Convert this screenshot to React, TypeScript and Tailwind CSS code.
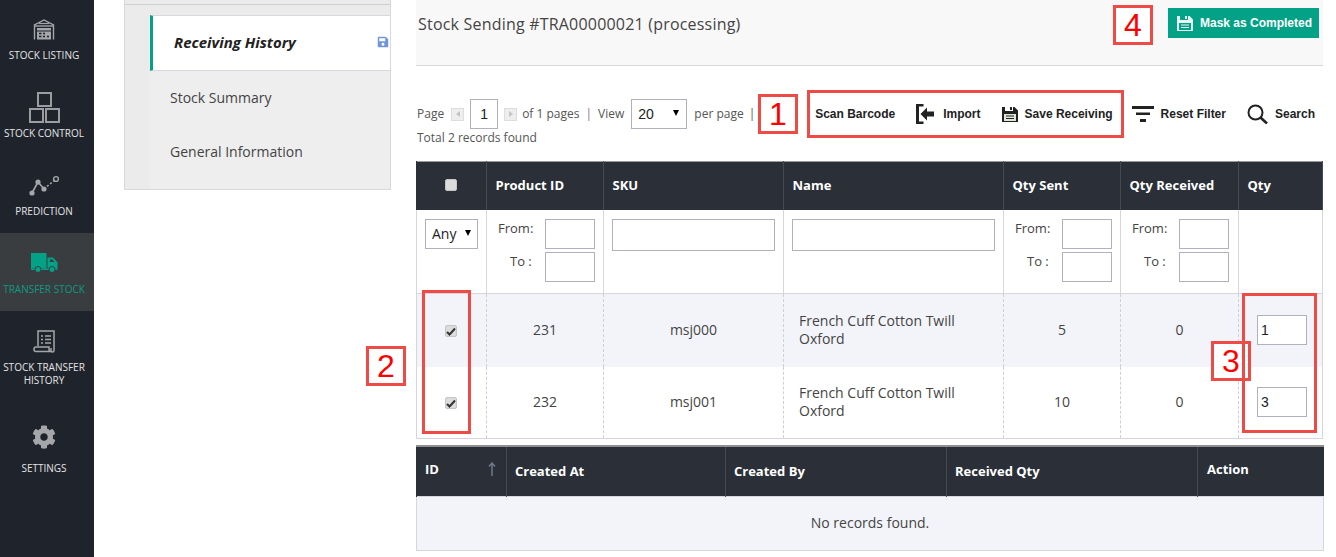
import { FaCog, FaSave } from 'react-icons/fa';

const green = '#03a287';

function WarehouseIcon() {
  return (
    <svg width="22" height="21" viewBox="0 0 22 21" fill="none" stroke="#a5a6a9" strokeWidth="1.4">
      <path d="M1.5 20.5V6L11 1l9.5 5v14.5" />
      <path d="M1.5 7h19" />
      <path d="M6 4.5h10" strokeWidth="1.2" />
      <rect x="4" y="9" width="14" height="11.5" fill="#a5a6a9" stroke="none" />
      <path d="M4 12h14" stroke="#1f232c" strokeWidth="1" />
      <path d="M6 14.5h2.5M10 14.5h2M6 17.5h2.5M10 17.5h2M14 17.5h2" stroke="#1f232c" strokeWidth="1.4" />
    </svg>
  );
}

function BoxesIcon() {
  return (
    <svg width="31" height="31" viewBox="0 0 31 31" fill="none" stroke="#9c9da0" strokeWidth="2">
      <rect x="9" y="1" width="13" height="13" />
      <rect x="1" y="17" width="13" height="13" />
      <rect x="17" y="17" width="13" height="13" />
    </svg>
  );
}

function PredictionIcon() {
  return (
    <svg width="31" height="21" viewBox="0 0 31 21">
      <path d="M3 18L9 7l6 7" fill="none" stroke="#a5a6a9" strokeWidth="1.6" />
      <path d="M15 14l12-10" fill="none" stroke="#a5a6a9" strokeWidth="1.6" strokeDasharray="2 2" />
      <circle cx="3" cy="18" r="2.6" fill="#a5a6a9" />
      <circle cx="9" cy="7" r="2.6" fill="#a5a6a9" />
      <circle cx="15" cy="14" r="2.6" fill="#a5a6a9" />
      <circle cx="27" cy="4" r="2.4" fill="none" stroke="#a5a6a9" strokeWidth="1.4" />
    </svg>
  );
}

function TruckIcon() {
  return (
    <svg width="27" height="20" viewBox="0 0 27 20" fill={green}>
      <path d="M0 0h15.5v15.5H0z" />
      <path d="M16.5 4.5h5.5l4.5 5v6h-10z" />
      <path d="M19 6.5h2.4l2 2.6H19z" fill="#3a3d40" />
      <path d="M0 15.5h26.5v1.5H0z" />
      <circle cx="7" cy="16.5" r="3" stroke="#3a3d40" />
      <circle cx="21" cy="16.5" r="3" stroke="#3a3d40" />
    </svg>
  );
}

function ReceiptIcon() {
  return (
    <svg width="22" height="23" viewBox="0 0 22 23" fill="none" stroke="#a5a6a9" strokeWidth="1.5">
      <path d="M5 16V1h16v19.5a1.5 1.5 0 0 1-3 0V18" />
      <path d="M1 19a2 2 0 0 1 2-2h13v2.5a2 2 0 0 0 2 2H3a2 2 0 0 1-2-2z" />
      <path d="M8 6h2M12 6h6M8 9.5h2M12 9.5h6M8 13h2M12 13h6" />
    </svg>
  );
}

function SaveIcon({ color, inner }: { color: string; inner: string }) {
  return (
    <svg width="16" height="16" viewBox="0 0 16 16">
      <path d="M0 1h3v4h8V1h1.5L16 4.5V16H0z" fill={color} />
      <path d="M8 1h2v3H8z" fill={color} />
      <path d="M2 8h12v7H2z" fill={inner} />
      <path d="M4 10h8M4 12.5h8" stroke={color} strokeWidth="1" />
    </svg>
  );
}

function ImportIcon() {
  return (
    <svg width="18" height="20" viewBox="0 0 18 20" fill="#222">
      <path d="M0 0h7.5v2.5H3v15h4.5V20H0z" />
      <path d="M4.5 10L11 3.5v4h7v5h-7v4z" />
    </svg>
  );
}

function FilterIcon() {
  return (
    <svg width="22" height="16" viewBox="0 0 22 16" fill="#222">
      <path d="M0 0h22v3H0zM4 6.5h14v2.5H4zM8 13h6v3H8z" />
    </svg>
  );
}

function SearchIcon() {
  return (
    <svg width="21" height="20" viewBox="0 0 21 20" fill="none" stroke="#222" strokeWidth="2">
      <circle cx="8.5" cy="8.5" r="7" />
      <path d="M13.5 13.5L20 19.5" strokeWidth="2.6" />
    </svg>
  );
}

function NavItem({
  icon,
  label,
  active,
  settings,
}: {
  icon: React.ReactNode;
  label: React.ReactNode;
  active?: boolean;
  settings?: boolean;
}) {
  return (
    <div
      className={`flex flex-col items-center pr-[6px] pt-[15px] ${active ? 'bg-[#3a3d40] text-[#0c9a80]' : 'text-[#e4e4e4]'} ${settings ? 'h-[120px]' : 'min-h-[78px]'}`}
    >
      <div className="flex h-[30px] items-center justify-center">{icon}</div>
      <div className={`text-center text-[10px] leading-[13px] ${settings ? 'mt-[10px]' : 'mt-[5px]'}`}>{label}</div>
    </div>
  );
}

function Sidebar() {
  return (
    <nav className="-mt-px w-[94px] shrink-0 bg-[#1f232c]">
      <NavItem icon={<WarehouseIcon />} label="STOCK LISTING" />
      <NavItem icon={<BoxesIcon />} label="STOCK CONTROL" />
      <NavItem icon={<PredictionIcon />} label="PREDICTION" />
      <NavItem icon={<TruckIcon />} label="TRANSFER STOCK" active />
      <div className="h-[96px]">
        <NavItem
          icon={<ReceiptIcon />}
          label={
            <>
              STOCK TRANSFER
              <br />
              HISTORY
            </>
          }
        />
      </div>
      <NavItem icon={<FaCog className="text-[24px] text-[#a5a6a9]" />} label="SETTINGS" settings />
    </nav>
  );
}

function SidePanel() {
  return (
    <aside className="ml-[30px] h-[190px] w-[267px] shrink-0 border-x border-b border-[#d8d8de] bg-[#ebebeb] text-[14px] text-[#444]">
      <div className="h-[5px] border-b border-[#cfcfcf]" />
      <div className="ml-[25px] mt-[10px] bg-[#eeeeee] pb-[10px]">
        <div className="flex h-[56px] items-center justify-between border-y border-l-[3px] border-[#d8d8de] border-l-[#03a287] bg-white pb-[2px] pl-[21px]">
          <span className="text-[15px] font-bold italic text-[#222]">Receiving History</span>
          <FaSave className="mr-[1px] text-[12px] text-[#6f96d8]" />
        </div>
        <div className="flex h-[54px] items-center pb-[2px] pl-[20px]">Stock Summary</div>
        <div className="flex h-[54px] items-center pb-[2px] pl-[20px]">General Information</div>
      </div>
    </aside>
  );
}

function PagerButton({ dir }: { dir: 'prev' | 'next' }) {
  return (
    <span className="flex h-[13px] w-[13px] items-center justify-center border border-[#dddddd] bg-[#eeeeee]">
      <span
        className={`h-0 w-0 border-y-[3px] border-y-transparent ${dir === 'prev' ? 'border-r-[4px] border-r-[#c4c4c4]' : 'border-l-[4px] border-l-[#c4c4c4]'}`}
      />
    </span>
  );
}

function Toolbar() {
  return (
    <div className="flex h-[95px] justify-between text-[12px] text-[#555]">
      <div className="pt-[33px]">
        <div className="flex h-[30px] items-center pl-px">
          <span>Page</span>
          <span className="ml-[7px]">
            <PagerButton dir="prev" />
          </span>
          <span className="ml-[6px] flex h-[30px] w-[28px] items-center justify-center border border-[#b1b1bd] font-['Liberation_Sans'] text-[14px] text-[#222]">
            1
          </span>
          <span className="ml-[6px]">
            <PagerButton dir="next" />
          </span>
          <span className="ml-[5px]">of 1 pages</span>
          <span className="ml-[6px] text-[#88708f]">|</span>
          <span className="ml-[6px]">View</span>
          <span className="relative ml-[7px] flex h-[30px] w-[56px] items-center border border-[#b1b1bd] pl-[6px] font-['Liberation_Sans'] text-[14px] text-[#222]">
            20
            <span className="absolute right-[7px] top-[10px] h-0 w-0 border-x-[3.5px] border-t-[6px] border-x-transparent border-t-black" />
          </span>
          <span className="ml-[7px]">per page</span>
          <span className="ml-[5px]">|</span>
        </div>
        <div className="mt-[1px] pl-px leading-[16px]">Total 2 records found</div>
      </div>
      <div className="mr-[8px] box-content flex h-[48px] items-center pt-[24px] font-['Liberation_Sans'] text-[12px] font-bold text-[#222]">
        <span>Scan Barcode</span>
        <span className="ml-[21px] flex items-center gap-[9px]">
          <ImportIcon />
          Import
        </span>
        <span className="ml-[21px] flex items-center gap-[7px]">
          <SaveIcon color="#222" inner="#dfe6d8" />
          Save Receiving
        </span>
        <span className="ml-[19px] flex items-center gap-[7px]">
          <FilterIcon />
          Reset Filter
        </span>
        <span className="ml-[21px] flex items-center gap-[7px]">
          <SearchIcon />
          Search
        </span>
      </div>
    </div>
  );
}

function Checkbox({ checked }: { checked?: boolean }) {
  return (
    <span className="inline-flex h-[12px] w-[12px] items-center justify-center rounded-[2px] border border-[#c4c4c4] bg-[#dcdcdc] align-middle">
      {checked && (
        <svg width="10" height="9" viewBox="0 0 10 9" fill="none" stroke="#333" strokeWidth="2">
          <path d="M1 5l2.5 2.5L9 1.5" />
        </svg>
      )}
    </span>
  );
}

function RangeFilter({ className }: { className: string }) {
  return (
    <div className={`flex flex-col gap-[3px] pl-[11px] ${className}`}>
      <div className="flex items-start justify-between">
        <span className="text-[13px] leading-[18px]">From:</span>
        <span className="h-[30px] w-[50px] border border-[#b1b1bd] bg-white" />
      </div>
      <div className="flex items-start justify-between">
        <span className="pl-[12px] text-[13px] leading-[18px]">To :</span>
        <span className="h-[30px] w-[50px] border border-[#b1b1bd] bg-white" />
      </div>
    </div>
  );
}

function SendingTable() {
  const headers = ['Product ID', 'SKU', 'Name', 'Qty Sent', 'Qty Received', 'Qty'];
  const rows = [
    { id: '231', sku: 'msj000', sent: '5', qty: '1' },
    { id: '232', sku: 'msj001', sent: '10', qty: '3' },
  ];
  return (
    <table className="w-[906px] table-fixed border-collapse text-[14px] text-[#444]">
      <colgroup>
        <col className="w-[70px]" />
        <col className="w-[117px]" />
        <col className="w-[180px]" />
        <col className="w-[220px]" />
        <col className="w-[117px]" />
        <col className="w-[118px]" />
        <col className="w-[84px]" />
      </colgroup>
      <thead>
        <tr className="h-[48px] border-t border-[#9a9a9a] bg-[#2b2f38] text-left text-[13px] font-bold text-white">
          <th className="border-x border-l-[#2b2f38] border-r-[#454952] pb-[4px] pr-[2px] text-center">
            <Checkbox />
          </th>
          {headers.map((h) => (
            <th key={h} className="border-r border-[#454952] pl-[8.5px]">
              {h}
            </th>
          ))}
        </tr>
      </thead>
      <tbody>
        <tr className="h-[84px] border-x border-[#d6d6dc] align-top">
          <td className="border-r border-[#d6d6dc] pl-[8px] pt-[9px]">
            <span className="relative flex h-[30px] w-[53px] items-center border border-[#b1b1bd] pl-[6px] text-[14px] text-[#222]">
              Any
              <span className="absolute right-[6px] top-[10px] h-0 w-0 border-x-[3.5px] border-t-[6px] border-x-transparent border-t-black" />
            </span>
          </td>
          <td className="border-r border-[#d6d6dc] pt-[9px]">
            <RangeFilter className="pr-[8px]" />
          </td>
          <td className="border-r border-[#d6d6dc] pl-[8px] pt-[9px]">
            <span className="block h-[32px] w-[163px] border border-[#b1b1bd]" />
          </td>
          <td className="border-r border-[#d6d6dc] pl-[8px] pt-[9px]">
            <span className="block h-[32px] w-[203px] border border-[#b1b1bd]" />
          </td>
          <td className="border-r border-[#d6d6dc] pt-[9px]">
            <RangeFilter className="pr-[8px]" />
          </td>
          <td className="border-r border-[#d6d6dc] pt-[9px]">
            <RangeFilter className="pr-[9px]" />
          </td>
          <td />
        </tr>
        {rows.map((row, i) => (
          <tr
            key={row.id}
            className={`border-x border-[#d6d6dc] text-center ${i === 0 ? 'h-[73px] border-t bg-[#f3f4fa]' : 'h-[72px] border-b bg-white'}`}
          >
            <td className="border-r border-dashed border-r-[#cfcfd6] pb-[2px] pr-[2px]">
              <Checkbox checked />
            </td>
            <td className="border-r border-dashed border-r-[#cfcfd6] pb-[2px]">{row.id}</td>
            <td className="border-r border-dashed border-r-[#cfcfd6] pb-[2px]">{row.sku}</td>
            <td className="border-r border-dashed border-r-[#cfcfd6] pl-[15px] text-left leading-[18px]">
              French Cuff Cotton Twill
              <br />
              Oxford
            </td>
            <td className="border-r border-dashed border-r-[#cfcfd6] pb-[2px]">{row.sent}</td>
            <td className="border-r border-dashed border-r-[#cfcfd6] pb-[2px]">0</td>
            <td className="pl-[18px] text-left">
              <span className="flex h-[30px] w-[50px] items-center border border-[#b1b1bd] bg-white pl-[3px] font-['Liberation_Sans'] text-[14px] text-[#222]">
                {row.qty}
              </span>
            </td>
          </tr>
        ))}
      </tbody>
    </table>
  );
}

function HistoryTable() {
  return (
    <table className="mt-[6px] w-[907px] table-fixed border-collapse text-[#444]">
      <colgroup>
        <col className="w-[90px]" />
        <col className="w-[219px]" />
        <col className="w-[221px]" />
        <col className="w-[251px]" />
        <col className="w-[126px]" />
      </colgroup>
      <thead>
        <tr className="h-[50px] border-t-2 border-[#8f8f8f] bg-[#2b2f38] text-left text-[13px] font-bold text-white">
          <th className="border-x border-l-[#2b2f38] border-r-[#454952] pb-[4px] pl-[8px]">
            <span className="flex items-center justify-between pr-[10px]">
              ID
              <svg width="8" height="14" viewBox="0 0 8 14" fill="none" stroke="#6f7a89" strokeWidth="1.5">
                <path d="M4 14V2M1 4.5L4 1l3 3.5" />
              </svg>
            </span>
          </th>
          <th className="border-r border-[#454952] pl-[8px]">Created At</th>
          <th className="border-r border-[#454952] pl-[8px]">Created By</th>
          <th className="border-r border-[#454952] pl-[8px]">Received Qty</th>
          <th className="pb-[4px] pl-[9px]">Action</th>
        </tr>
      </thead>
      <tbody>
        <tr className="h-[54px] border border-[#d6d6dc] bg-[#f3f4fa] text-center text-[14px]">
          <td colSpan={5} className="pb-[2px]">
            No records found.
          </td>
        </tr>
      </tbody>
    </table>
  );
}

function Badge({ n, className }: { n: string; className: string }) {
  return (
    <div
      className={`absolute flex h-[40px] w-[40px] items-center justify-center border-[3px] border-[#ee4b47] bg-white font-['Liberation_Sans'] text-[32px] text-[#ff0000] ${className}`}
    >
      {n}
    </div>
  );
}

export default function App() {
  return (
    <div className="relative flex h-[557px] w-[1336px] overflow-hidden bg-white font-['Open_Sans',sans-serif]">
      <Sidebar />
      <SidePanel />
      <main className="ml-[25px] w-[907px] shrink-0">
        <header className="flex h-[66px] items-start justify-between border-b border-[#d8d8d8] bg-[#f8f8f8] pl-[2px] pr-[4px]">
          <h1 className="mt-[13px] text-[16px] leading-[22px] tracking-[0.2px] text-[#444]">
            Stock Sending #TRA00000021 (processing)
          </h1>
          <button
            type="button"
            className="mt-[8px] flex h-[30px] w-[151px] items-center gap-[7px] bg-[#03a287] pl-[9px] font-['Liberation_Sans'] text-[12px] font-bold text-white"
          >
            <SaveIcon color="#e8f7f4" inner="#03a287" />
            Mask as Completed
          </button>
        </header>
        <Toolbar />
        <SendingTable />
        <HistoryTable />
      </main>

      {/* annotations drawn over the screenshot */}
      <Badge n="1" className="left-[758px] top-[94px]" />
      <Badge n="2" className="left-[366px] top-[346px]" />
      <Badge n="3" className="left-[1211px] top-[341px]" />
      <Badge n="4" className="left-[1113px] top-[5px]" />
      <div className="absolute left-[807px] top-[90px] h-[48px] w-[317px] border-[3px] border-[#ee4b47]" />
      <div className="absolute left-[422px] top-[290px] h-[144px] w-[49px] border-[3px] border-[#ee4b47]" />
      <div className="absolute left-[1242px] top-[293px] h-[140px] w-[75px] border-[3px] border-[#ee4b47]" />
    </div>
  );
}
